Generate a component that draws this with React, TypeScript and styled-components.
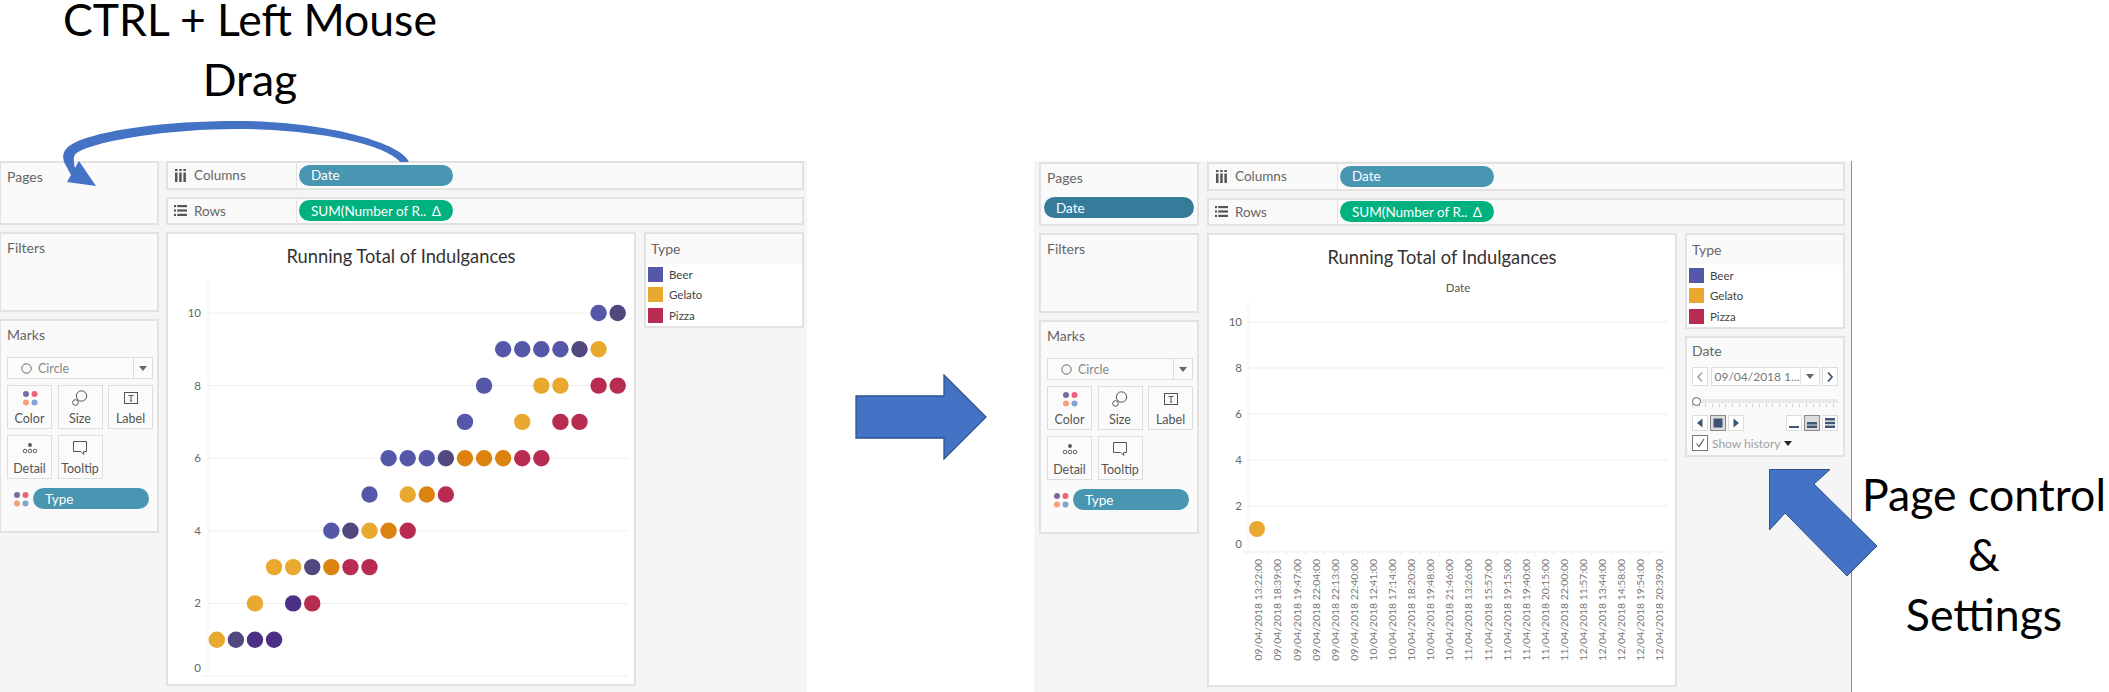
import React from "react";
import styled, { createGlobalStyle } from "styled-components";

const GlobalStyle = createGlobalStyle`
  body {
    margin: 0;
    background: #fff;
    font-family: "Lato", "Liberation Sans", sans-serif;
  }
`;

const colors = {
  beer: "#5558a9",
  dusk: "#50487f",
  grape: "#4b3086",
  gelato: "#e9a92e",
  amber: "#dc820f",
  pizza: "#b72c50",
};

type Tone = keyof typeof colors;

// [value, column, colour] read off the running total chart
const runningDots: [number, number, Tone][] = [
  [1, 0, "gelato"], [1, 1, "dusk"], [1, 2, "grape"], [1, 3, "grape"],
  [2, 2, "gelato"], [2, 4, "grape"], [2, 5, "pizza"],
  [3, 3, "gelato"], [3, 4, "gelato"], [3, 5, "dusk"], [3, 6, "amber"], [3, 7, "pizza"], [3, 8, "pizza"],
  [4, 6, "beer"], [4, 7, "dusk"], [4, 8, "gelato"], [4, 9, "amber"], [4, 10, "pizza"],
  [5, 8, "beer"], [5, 10, "gelato"], [5, 11, "amber"], [5, 12, "pizza"],
  [6, 9, "beer"], [6, 10, "beer"], [6, 11, "beer"], [6, 12, "dusk"], [6, 13, "amber"], [6, 14, "amber"], [6, 15, "amber"], [6, 16, "pizza"], [6, 17, "pizza"],
  [7, 13, "beer"], [7, 16, "gelato"], [7, 18, "pizza"], [7, 19, "pizza"],
  [8, 14, "beer"], [8, 17, "gelato"], [8, 18, "gelato"], [8, 20, "pizza"], [8, 21, "pizza"],
  [9, 15, "beer"], [9, 16, "beer"], [9, 17, "beer"], [9, 18, "beer"], [9, 19, "dusk"], [9, 20, "gelato"],
  [10, 20, "beer"], [10, 21, "dusk"],
];

const pageDates = [
  "09/04/2018 13:22:00", "09/04/2018 18:39:00", "09/04/2018 19:47:00", "09/04/2018 22:04:00",
  "09/04/2018 22:13:00", "09/04/2018 22:40:00", "10/04/2018 12:41:00", "10/04/2018 17:14:00",
  "10/04/2018 18:20:00", "10/04/2018 19:48:00", "10/04/2018 21:46:00", "11/04/2018 13:26:00",
  "11/04/2018 15:57:00", "11/04/2018 19:15:00", "11/04/2018 19:40:00", "11/04/2018 20:15:00",
  "11/04/2018 22:00:00", "12/04/2018 11:57:00", "12/04/2018 13:44:00", "12/04/2018 14:58:00",
  "12/04/2018 19:54:00", "12/04/2018 20:39:00",
];

const Page = styled.div`
  position: relative;
  width: 2109px;
  height: 692px;
  overflow: hidden;
  display: grid;
  grid-template-columns: 807px 227px 818px 257px;
  grid-template-rows: 161px 531px;
  background: #fff;
  color: #000;
`;

const Heading = styled.h1`
  grid-column: 1 / 5;
  width: 500px;
  margin: -11px 0 0;
  font-size: 44.5px;
  line-height: 60px;
  font-weight: 400;
  text-align: center;
`;

const Line = styled.span`
  display: block;
  white-space: nowrap;
`;

const BetweenShots = styled.div`
  display: flex;
  align-items: center;
  justify-content: center;
  padding-bottom: 19px;
`;

const Note = styled.div`
  padding: 303px 0 0 7px;
  font-size: 44.6px;
  line-height: 60px;
  text-align: center;
`;

const Shot = styled.div<{ $bleed?: boolean }>`
  display: flex;
  gap: 8px;
  overflow: hidden;
  background: #f5f5f5;
  padding-top: ${(p) => (p.$bleed ? 0 : 1)}px;
  padding-left: ${(p) => (p.$bleed ? 0 : 5)}px;
  border-right: ${(p) => (p.$bleed ? "none" : "1px solid #5b9bd0")};
`;

const Rail = styled.div<{ $bleed?: boolean }>`
  flex: none;
  width: 160px;
  margin: 0 ${(p) => (p.$bleed ? -1 : 0)}px;
  display: flex;
  flex-direction: column;
  gap: 7px;
`;

const Panel = styled.section<{ $height: number; $white?: boolean }>`
  flex: none;
  box-sizing: border-box;
  height: ${(p) => p.$height}px;
  border: 2px solid #e2e2e2;
  background: ${(p) => (p.$white ? "#fff" : "#fafafa")};
`;

const PanelTitle = styled.div`
  padding: 5px 6px 0;
  font-size: 14px;
  line-height: 18px;
  color: #666;
`;

const Pill = styled.div<{ $width: number; $tone: "blue" | "green" | "deep" }>`
  flex: none;
  box-sizing: border-box;
  width: ${(p) => p.$width}px;
  height: 21px;
  padding: 0 12px;
  border-radius: 11px;
  display: flex;
  align-items: center;
  justify-content: space-between;
  font-size: 13.5px;
  color: #fff;
  white-space: nowrap;
  background: ${(p) =>
    p.$tone === "green" ? "#00b180" : p.$tone === "deep" ? "#377b9b" : "#4996b2"};
`;

const PagesPill = styled.div`
  margin: 10px 0 0 3px;
`;

const MarkSelect = styled.div`
  height: 22px;
  margin: 13px 4px 0 6px;
  box-sizing: border-box;
  border: 1px solid #ddd;
  background: #fbfbfb;
  display: flex;
  align-items: center;
  font-size: 12.5px;
  color: #888;
`;

const MarkName = styled.div`
  flex: 1;
  display: flex;
  align-items: center;
  gap: 6px;
  padding-left: 13px;
  border-right: 1px solid #ddd;
  height: 100%;
`;

const SelectCaret = styled.div`
  width: 18px;
  display: flex;
  justify-content: center;
  color: #666;
`;

const MarkGrid = styled.div`
  margin: 6px 4px 0 6px;
  display: grid;
  grid-template-columns: repeat(3, 45px);
  grid-auto-rows: 44px;
  gap: 6px 5.5px;
`;

const MarkButton = styled.div`
  box-sizing: border-box;
  border: 1px solid #ddd;
  background: #fbfbfb;
  display: flex;
  flex-direction: column;
  align-items: center;
  justify-content: space-between;
  padding: 4px 0 2px;
  font-size: 12.5px;
  line-height: 15px;
  color: #555;
`;

const EncodingRow = styled.div`
  margin: 9px 0 0 12px;
  display: flex;
  align-items: center;
  gap: 4px;
`;

const Workspace = styled.div`
  flex: none;
  width: 638px;
  display: flex;
  flex-direction: column;
  gap: 7px;
`;

const Shelf = styled.div`
  box-sizing: border-box;
  height: 28.5px;
  border: 2px solid #e2e2e2;
  background: #fafafa;
  display: flex;
  align-items: center;
  font-size: 13.5px;
  color: #666;
`;

const ShelfName = styled.div`
  box-sizing: border-box;
  flex: none;
  width: 129px;
  height: 100%;
  padding-left: 6px;
  margin-right: 2px;
  display: flex;
  align-items: center;
  gap: 7px;
  border-right: 1px solid #e2e2e2;
`;

const Body = styled.div`
  display: flex;
  gap: 8px;
`;

const ChartCard = styled.div`
  flex: none;
  box-sizing: border-box;
  width: 470px;
  height: 454px;
  border: 2px solid #e2e2e2;
  background: #fff;
  display: flex;
  flex-direction: column;
`;

const ChartHead = styled.div<{ $height: number }>`
  flex: none;
  height: ${(p) => p.$height}px;
  text-align: center;
`;

const ChartTitle = styled.div`
  padding-top: 10px;
  font-size: 18.3px;
  line-height: 24px;
  color: #333;
`;

const ChartSub = styled.div`
  margin-top: 11px;
  padding-left: 32px;
  font-size: 11.5px;
  line-height: 16px;
  color: #555;
`;

const Plot = styled.svg`
  flex: 1;
  display: block;
  width: 466px;
  font-family: "Lato", "Liberation Sans", sans-serif;
`;

const Side = styled.div`
  flex: none;
  width: 160px;
  display: flex;
  flex-direction: column;
  gap: 7px;
`;

const LegendHead = styled.div`
  height: 30px;
  box-sizing: border-box;
  background: #fafafa;
  padding: 6px 5px 0;
  font-size: 14px;
  line-height: 18px;
  color: #666;
`;

const LegendRow = styled.div`
  height: 20.6px;
  padding-left: 2px;
  display: flex;
  align-items: center;
  gap: 6px;
  font-size: 11.5px;
  color: #444;
`;

const Swatch = styled.span<{ $tone: Tone }>`
  width: 15px;
  height: 15px;
  background: ${(p) => colors[p.$tone]};
`;

const ControlTitle = styled.div`
  padding: 4px 5px 0;
  font-size: 14px;
  line-height: 18px;
  color: #666;
`;

const ControlStack = styled.div`
  margin: 7px 0 0 5px;
  width: 146px;
`;

const NavRow = styled.div`
  display: flex;
  gap: 2.5px;
  height: 19px;
`;

const SquareButton = styled.div<{ $on?: boolean }>`
  flex: none;
  box-sizing: border-box;
  width: 16px;
  height: 100%;
  background: ${(p) => (p.$on ? "#ddd" : "#fff")};
  border: 1px solid ${(p) => (p.$on ? "#888" : "#ddd")};
  display: flex;
  align-items: center;
  justify-content: center;
`;

const DateSelect = styled.div`
  flex: 1;
  box-sizing: border-box;
  border: 1px solid #ddd;
  background: #fff;
  display: flex;
  align-items: center;
  font-size: 12px;
  color: #777;
  white-space: nowrap;
`;

const DateValue = styled.div`
  flex: 1;
  height: 100%;
  display: flex;
  align-items: center;
  padding-left: 3px;
  border-right: 1px solid #e4e4e4;
`;

const Slider = styled.div`
  position: relative;
  margin-top: 13px;
  height: 4px;
  background: #e8e8e8;
`;

const SliderThumb = styled.div`
  position: absolute;
  left: 0;
  top: -2.5px;
  box-sizing: border-box;
  width: 9px;
  height: 9px;
  border-radius: 50%;
  border: 1px solid #666;
  background: #fff;
`;

const SliderTicks = styled.div`
  height: 3px;
  margin-top: 1px;
  background: repeating-linear-gradient(90deg, #ccc 0 1px, transparent 1px 6.7px);
`;

const PlayRow = styled.div`
  margin-top: 8px;
  height: 16px;
  display: flex;
  justify-content: space-between;
`;

const ButtonGroup = styled.div`
  display: flex;
  gap: 2px;
`;

const HistoryRow = styled.div`
  margin-top: 4px;
  display: flex;
  align-items: center;
  gap: 4px;
  font-size: 12px;
  color: #a0a0a0;
`;

const Tick = styled.div`
  box-sizing: border-box;
  width: 16px;
  height: 16px;
  border: 1px solid #777;
  background: #fff;
  display: flex;
  align-items: center;
  justify-content: center;
`;

const Overlay = styled.svg`
  position: absolute;
  left: 0;
  top: 0;
  pointer-events: none;
`;

const ColorDots = ({ size = 16 }: { size?: number }) => (
  <svg width={size} height={size} viewBox="0 0 16 16">
    <circle cx="4" cy="4" r="3" fill="#7b6a9f" />
    <circle cx="12.5" cy="4" r="3" fill="#ef6079" />
    <circle cx="4" cy="12.5" r="3" fill="#f2a276" />
    <circle cx="12.5" cy="12.5" r="3" fill="#7fa4cf" />
  </svg>
);

const SizeIcon = () => (
  <svg width="16" height="16" viewBox="0 0 16 16" fill="none" stroke="#555" strokeWidth="1">
    <circle cx="9.5" cy="6" r="5.2" />
    <circle cx="3.5" cy="12.5" r="2.8" fill="#fbfbfb" />
  </svg>
);

const LabelIcon = () => (
  <svg width="16" height="16" viewBox="0 0 16 16" fill="none" stroke="#555" strokeWidth="1">
    <rect x="1.5" y="2.5" width="13" height="11" />
    <path d="M5.5 5.5h5M8 5.5v5.5M6.8 11h2.4" />
  </svg>
);

const DetailIcon = () => (
  <svg width="16" height="16" viewBox="0 0 16 16" fill="none" stroke="#555" strokeWidth="0.9">
    <circle cx="8" cy="5" r="1.9" fill="#555" stroke="none" />
    <circle cx="3" cy="11" r="1.8" />
    <circle cx="8" cy="11" r="1.8" />
    <circle cx="13" cy="11" r="1.8" />
  </svg>
);

const TooltipIcon = () => (
  <svg width="16" height="16" viewBox="0 0 16 16" fill="none" stroke="#555" strokeWidth="1">
    <path d="M1.5 1.5h13v10h-2.8v3l-3-3H1.5z" />
  </svg>
);

const ColumnsIcon = () => (
  <svg width="13" height="13" viewBox="0 0 13 13" fill="#555">
    <rect x="1" y="0" width="2.5" height="2" />
    <rect x="1" y="3.5" width="2.5" height="9.5" />
    <rect x="5.2" y="0" width="2.5" height="2" />
    <rect x="5.2" y="3.5" width="2.5" height="9.5" />
    <rect x="9.4" y="0" width="2.5" height="2" />
    <rect x="9.4" y="3.5" width="2.5" height="9.5" />
  </svg>
);

const RowsIcon = () => (
  <svg width="13" height="13" viewBox="0 0 13 13" fill="#555">
    <rect x="0" y="1" width="2" height="2.2" />
    <rect x="3.2" y="1" width="9.8" height="2.2" />
    <rect x="0" y="5.4" width="2" height="2.2" />
    <rect x="3.2" y="5.4" width="9.8" height="2.2" />
    <rect x="0" y="9.8" width="2" height="2.2" />
    <rect x="3.2" y="9.8" width="9.8" height="2.2" />
  </svg>
);

const Caret = ({ color = "#666" }: { color?: string }) => (
  <svg width="8" height="5" viewBox="0 0 8 5">
    <path d="M0 0h8L4 5z" fill={color} />
  </svg>
);

const Glyph = ({ d }: { d: string }) => (
  <svg width="12" height="12" viewBox="0 0 12 12">
    <path d={d} fill="#3f5573" />
  </svg>
);

const Chevron = ({ d, color }: { d: string; color: string }) => (
  <svg width="8" height="12" viewBox="0 0 8 12" fill="none" stroke={color} strokeWidth="1.8">
    <path d={d} />
  </svg>
);

const ShelfNames = {
  columns: (
    <ShelfName>
      <ColumnsIcon />
      Columns
    </ShelfName>
  ),
  rows: (
    <ShelfName>
      <RowsIcon />
      Rows
    </ShelfName>
  ),
};

const MarksCard = () => (
  <>
    <PanelTitle>Marks</PanelTitle>
    <MarkSelect>
      <MarkName>
        <svg width="11" height="11" viewBox="0 0 11 11" fill="none" stroke="#666" strokeWidth="1">
          <circle cx="5.5" cy="5.5" r="4.7" />
        </svg>
        Circle
      </MarkName>
      <SelectCaret>
        <Caret />
      </SelectCaret>
    </MarkSelect>
    <MarkGrid>
      <MarkButton>
        <ColorDots />
        Color
      </MarkButton>
      <MarkButton>
        <SizeIcon />
        Size
      </MarkButton>
      <MarkButton>
        <LabelIcon />
        Label
      </MarkButton>
      <MarkButton>
        <DetailIcon />
        Detail
      </MarkButton>
      <MarkButton>
        <TooltipIcon />
        Tooltip
      </MarkButton>
    </MarkGrid>
    <EncodingRow>
      <ColorDots />
      <Pill $width={116} $tone="blue">
        Type
      </Pill>
    </EncodingRow>
  </>
);

const Legend = () => (
  <Panel $height={96} $white>
    <LegendHead>Type</LegendHead>
    <LegendRow>
      <Swatch $tone="beer" />
      Beer
    </LegendRow>
    <LegendRow>
      <Swatch $tone="gelato" />
      Gelato
    </LegendRow>
    <LegendRow>
      <Swatch $tone="pizza" />
      Pizza
    </LegendRow>
  </Panel>
);

const PageControl = () => (
  <Panel $height={121}>
    <ControlTitle>Date</ControlTitle>
    <ControlStack>
      <NavRow>
        <SquareButton>
          <Chevron d="M6 1.5 2 6l4 4.5" color="#aaa" />
        </SquareButton>
        <DateSelect>
          <DateValue>09/04/2018 1...</DateValue>
          <SelectCaret>
            <Caret />
          </SelectCaret>
        </DateSelect>
        <SquareButton>
          <Chevron d="M2 1.5 6 6l-4 4.5" color="#3f5573" />
        </SquareButton>
      </NavRow>
      <Slider>
        <SliderThumb />
      </Slider>
      <SliderTicks />
      <PlayRow>
        <ButtonGroup>
          <SquareButton>
            <Glyph d="M8.5 1.5v9L3 6z" />
          </SquareButton>
          <SquareButton $on>
            <Glyph d="M1.5 1.5h9v9h-9z" />
          </SquareButton>
          <SquareButton>
            <Glyph d="M3.5 1.5v9L9 6z" />
          </SquareButton>
        </ButtonGroup>
        <ButtonGroup>
          <SquareButton>
            <Glyph d="M1 9h10v2H1z" />
          </SquareButton>
          <SquareButton $on>
            <Glyph d="M1 5h10v2.4H1zM1 8.6h10V11H1z" />
          </SquareButton>
          <SquareButton>
            <Glyph d="M1 1h10v2.4H1zM1 4.8h10v2.4H1zM1 8.6h10V11H1z" />
          </SquareButton>
        </ButtonGroup>
      </PlayRow>
      <HistoryRow>
        <Tick>
          <svg width="12" height="12" viewBox="0 0 12 12" fill="none" stroke="#555" strokeWidth="1.1">
            <path d="M2.5 6.5 5 9.5 10 2" />
          </svg>
        </Tick>
        Show history
        <Caret color="#222" />
      </HistoryRow>
    </ControlStack>
  </Panel>
);

const gridValues = [0, 2, 4, 6, 8, 10];

type PlotProps = {
  zero: number;
  unit: number;
  axisX: number;
  right: number;
  labelX: number;
  children: React.ReactNode;
};

const PlotFrame = ({ zero, unit, axisX, right, labelX, children }: PlotProps) => (
  <Plot>
    <line x1={axisX} x2={axisX} y1={0} y2={zero} stroke="#f2f2f2" />
    {gridValues.map((v) => (
      <g key={v}>
        <line
          x1={v === 0 ? axisX - 6 : axisX}
          x2={right}
          y1={zero - v * unit}
          y2={zero - v * unit}
          stroke="#eeeeee"
        />
        {/* the 0 label sits above its line in Tableau */}
        <text
          x={labelX}
          y={zero - v * unit + (v === 0 ? -4 : 4)}
          textAnchor="end"
          fontSize="11.5"
          fill="#666"
        >
          {v}
        </text>
      </g>
    ))}
    {children}
  </Plot>
);

const RunningPlot = () => (
  <PlotFrame zero={397} unit={36.3} axisX={40} right={460} labelX={33}>
    {runningDots.map(([value, column, tone]) => (
      <circle
        key={`${value}-${column}`}
        cx={48.8 + column * 19.09}
        cy={397 - value * 36.3}
        r={8.2}
        fill={colors[tone]}
      />
    ))}
  </PlotFrame>
);

const PagedPlot = () => (
  <PlotFrame zero={250} unit={23} axisX={39} right={459} labelX={33}>
    {pageDates.map((date, i) => {
      const x = 49.3 + i * 19.1;
      return (
        <g key={date}>
          <line x1={39 + i * 19.1} x2={39 + i * 19.1} y1={250} y2={254} stroke="#eeeeee" />
          <text
            x={x + 4}
            y={257}
            textAnchor="end"
            fontSize="10.4"
            fill="#777"
            transform={`rotate(-90 ${x + 4} 257)`}
          >
            {date}
          </text>
        </g>
      );
    })}
    <circle cx={48} cy={227} r={8} fill={colors.gelato} />
  </PlotFrame>
);

export default function App() {
  return (
    <Page>
      <GlobalStyle />
      <Heading>
        <Line>CTRL + Left Mouse</Line>
        <Line>Drag</Line>
      </Heading>

      <Shot $bleed>
        <Rail $bleed>
          <Panel $height={64}>
            <PanelTitle>Pages</PanelTitle>
          </Panel>
          <Panel $height={80}>
            <PanelTitle>Filters</PanelTitle>
          </Panel>
          <Panel $height={214}>
            <MarksCard />
          </Panel>
        </Rail>
        <Workspace>
          <Shelf>
            {ShelfNames.columns}
            <Pill $width={154} $tone="blue">
              Date
            </Pill>
          </Shelf>
          <Shelf>
            {ShelfNames.rows}
            <Pill $width={154} $tone="green">
              SUM(Number of R.. <span>Δ</span>
            </Pill>
          </Shelf>
          <Body>
            <ChartCard>
              <ChartHead $height={45}>
                <ChartTitle>Running Total of Indulgances</ChartTitle>
              </ChartHead>
              <RunningPlot />
            </ChartCard>
            <Side>
              <Legend />
            </Side>
          </Body>
        </Workspace>
      </Shot>

      <BetweenShots>
        <svg width="132" height="87" viewBox="0 0 132 87">
          <path
            d="M1 22h88V1l42 42-42 42V64H1z"
            fill="#4472c4"
            stroke="#2f528f"
            strokeWidth="1.3"
          />
        </svg>
      </BetweenShots>

      <Shot>
        <Rail>
          <Panel $height={64}>
            <PanelTitle>Pages</PanelTitle>
            <PagesPill>
              <Pill $width={150} $tone="deep">
                Date
              </Pill>
            </PagesPill>
          </Panel>
          <Panel $height={80}>
            <PanelTitle>Filters</PanelTitle>
          </Panel>
          <Panel $height={214}>
            <MarksCard />
          </Panel>
        </Rail>
        <Workspace>
          <Shelf>
            {ShelfNames.columns}
            <Pill $width={154} $tone="blue">
              Date
            </Pill>
          </Shelf>
          <Shelf>
            {ShelfNames.rows}
            <Pill $width={154} $tone="green">
              SUM(Number of R.. <span>Δ</span>
            </Pill>
          </Shelf>
          <Body>
            <ChartCard>
              <ChartHead $height={67}>
                <ChartTitle>Running Total of Indulgances</ChartTitle>
                <ChartSub>Date</ChartSub>
              </ChartHead>
              <PagedPlot />
            </ChartCard>
            <Side>
              <Legend />
              <PageControl />
            </Side>
          </Body>
        </Workspace>
      </Shot>

      <Note>
        <Line>Page control</Line>
        <Line>&amp;</Line>
        <Line>Settings</Line>
      </Note>

      <Overlay width="2109" height="692" viewBox="0 0 2109 692">
        <path
          d="M409 162C402 143 325 121 237 121C165 121 100 130 74 143C63 149 62 155 64 162L71 175L67 182L96 186L79 161L75 168C73 160 73 155 78 152C100 140 170 129 237 129C310 129 385 143 400 162Z"
          fill="#4472c4"
        />
        <path
          d="M1769.5 469.5H1830L1814 484L1877 546L1847 576L1785 513L1769.5 530Z"
          fill="#4472c4"
          stroke="#2f528f"
          strokeWidth="1"
        />
      </Overlay>
    </Page>
  );
}
